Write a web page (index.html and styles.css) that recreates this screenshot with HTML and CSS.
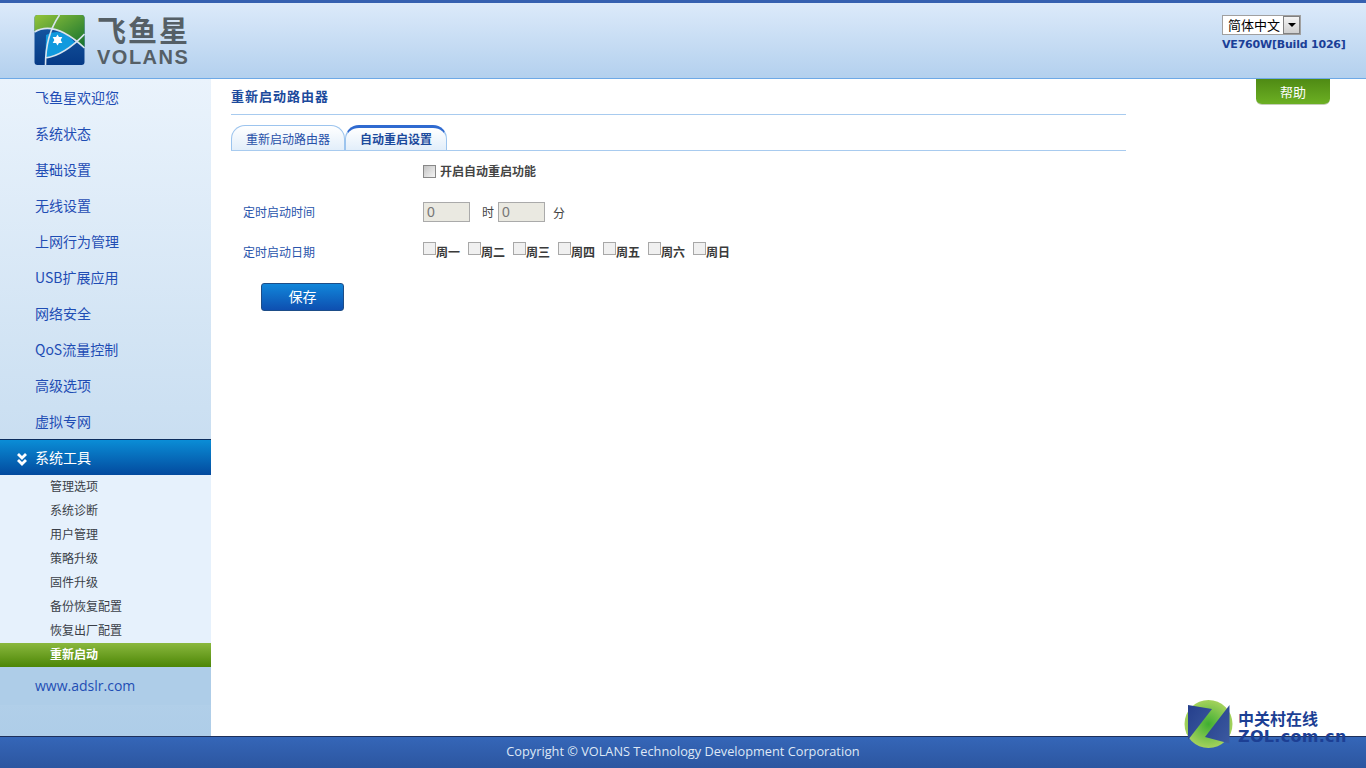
FILE: index.html
```html
<!DOCTYPE html>
<html lang="zh-CN">
<head>
    <meta charset="UTF-8">
    <meta name="viewport" content="width=device-width, initial-scale=1.0">
    <title>重新启动路由器</title>
    <link rel="stylesheet" href="styles.css">
</head>
<body>

<div class="header">
    <div class="logo">
        <svg class="logo-mark" width="51" height="50" viewBox="0 0 50 50">
            <defs>
                <linearGradient id="logoBlue" x1="0" y1="0" x2="0" y2="1">
                    <stop offset="0" stop-color="#1a5fa8"/>
                    <stop offset="1" stop-color="#063a86"/>
                </linearGradient>
                <linearGradient id="logoGreen" x1="0" y1="0" x2="1" y2="1">
                    <stop offset="0" stop-color="#93c43a"/>
                    <stop offset="1" stop-color="#12702f"/>
                </linearGradient>
            </defs>
            <rect width="50" height="50" rx="3" fill="url(#logoBlue)"/>
            <path d="M3 0H47Q50 0 50 3V33Q20 5 0 17V3Q0 0 3 0Z" fill="url(#logoGreen)"/>
            <path d="M11.5 20Q27 11 41 28Q27 40 11 43Z" fill="#119ade"/>
            <path d="M0 17Q20 5 50 33M25 0Q11 20 11 50M11 43Q30 40 50 19" fill="none" stroke="#d8e4ee" stroke-width="1.6"/>
            <polygon points="23,19.500 27.800,28 18.200,28" fill="#fff"/>
            <polygon points="23,30.500 18.200,22 27.800,22" fill="#fff"/>
        </svg>
        <div class="logo-text">
            <div class="logo-cn">飞鱼星</div>
            <div class="logo-en">VOLANS</div>
        </div>
    </div>
    <div class="header-right">
        <div class="lang">
            <select class="lang-select">
                <option>简体中文</option>
            </select>
            <span class="lang-arrow"></span>
        </div>
        <div class="build">VE760W[Build 1026]</div>
    </div>
</div>

<div class="main">
    <div class="sidebar">
        <a class="menu-item">飞鱼星欢迎您</a>
        <a class="menu-item">系统状态</a>
        <a class="menu-item">基础设置</a>
        <a class="menu-item">无线设置</a>
        <a class="menu-item">上网行为管理</a>
        <a class="menu-item">USB扩展应用</a>
        <a class="menu-item">网络安全</a>
        <a class="menu-item">QoS流量控制</a>
        <a class="menu-item">高级选项</a>
        <a class="menu-item">虚拟专网</a>
        <a class="menu-item menu-open">
            <svg class="menu-icon" width="12" height="14" viewBox="0 0 12 14">
                <path d="M2 2L6 6L10 2M2 8L6 12L10 8" fill="none" stroke="#fff" stroke-width="2.8"/>
            </svg>
            系统工具
        </a>
        <div class="submenu">
            <a class="sub-item">管理选项</a>
            <a class="sub-item">系统诊断</a>
            <a class="sub-item">用户管理</a>
            <a class="sub-item">策略升级</a>
            <a class="sub-item">固件升级</a>
            <a class="sub-item">备份恢复配置</a>
            <a class="sub-item">恢复出厂配置</a>
            <a class="sub-item sub-active">重新启动</a>
        </div>
        <a class="menu-item menu-link">www.adslr.com</a>
    </div>

    <div class="content">
        <h1 class="title">重新启动路由器</h1>
        <div class="tabs">
            <div class="tab">重新启动路由器</div>
            <div class="tab tab-active">自动重启设置</div>
        </div>
        <div class="form">
            <div class="form-row form-row-first">
                <div class="form-label"></div>
                <label class="enable"><input class="check check-on" type="checkbox"><span class="raise">开启自动重启功能</span></label>
            </div>
            <div class="form-row">
                <div class="form-label"><span class="raise">定时启动时间</span></div>
                <div class="time">
                    <input class="time-input" type="text" value="0" disabled>
                    <span class="unit-h">时</span>
                    <input class="time-input" type="text" value="0" disabled>
                    <span class="unit-m">分</span>
                </div>
            </div>
            <div class="form-row">
                <div class="form-label"><span class="raise">定时启动日期</span></div>
                <div class="days">
                    <label class="day"><input class="check" type="checkbox" disabled>周一</label>
                    <label class="day"><input class="check" type="checkbox" disabled>周二</label>
                    <label class="day"><input class="check" type="checkbox" disabled>周三</label>
                    <label class="day"><input class="check" type="checkbox" disabled>周四</label>
                    <label class="day"><input class="check" type="checkbox" disabled>周五</label>
                    <label class="day"><input class="check" type="checkbox" disabled>周六</label>
                    <label class="day"><input class="check" type="checkbox" disabled>周日</label>
                </div>
            </div>
            <button class="save" type="button">保存</button>
        </div>
    </div>

    <div class="help">帮助</div>
</div>

<div class="footer">Copyright © VOLANS Technology Development Corporation</div>

<div class="zol">
    <svg width="50" height="50" viewBox="0 0 50 50">
        <defs>
            <radialGradient id="zolGreen">
                <stop offset="0" stop-color="#3fae32"/>
                <stop offset="1" stop-color="#a4d25c"/>
            </radialGradient>
            <linearGradient id="zolBlue" x1="0" y1="0" x2="1" y2="1">
                <stop offset="0" stop-color="#253f8c"/>
                <stop offset="1" stop-color="#3c5aa0"/>
            </linearGradient>
        </defs>
        <circle cx="24.500" cy="24" r="24" fill="url(#zolGreen)"/>
        <polygon points="4,5 28,9 4,40" fill="url(#zolBlue)"/>
        <polygon points="45.500,5 45.500,43.500 21,37" fill="url(#zolBlue)"/>
    </svg>
    <div class="zol-text">
        <div class="zol-cn">中关村在线</div>
        <div class="zol-en">ZOL.com.cn</div>
    </div>
</div>

</body>
</html>
```

FILE: styles.css
```css
* {
    box-sizing: border-box;
}
body {
    margin: 0;
    height: 100vh;
    overflow: hidden;
    display: flex;
    flex-direction: column;
    position: relative;
    font-family: "Noto Sans CJK SC", "Noto Sans", sans-serif;
    font-size: 12px;
    background-color: #fff;
}
.header {
    height: 79px;
    flex: none;
    display: flex;
    justify-content: space-between;
    border-top: 3px solid #3560b0;
    border-bottom: 1px solid #6ea9e6;
    background: linear-gradient(#dceafa, #b3d0ee);
}
.logo {
    display: flex;
    padding: 12px 0 0 34px;
}
.logo-mark {
    flex: none;
}
.logo-text {
    margin-left: 12px;
    color: #555f66;
    font-weight: 700;
}
.logo-cn {
    font-size: 29px;
    line-height: 30px;
    letter-spacing: 2px;
    margin-top: -1px;
}
.logo-en {
    font-family: "Liberation Sans", sans-serif;
    font-size: 20px;
    line-height: 16px;
    letter-spacing: 1.500px;
    margin-top: 5px;
}
.header-right {
    width: 144px;
    padding-top: 12px;
}
.lang {
    position: relative;
    width: 79px;
    height: 20px;
}
.lang-select {
    appearance: none;
    display: block;
    width: 79px;
    height: 20px;
    margin: 0;
    padding: 0 0 0 5px;
    border: 1px solid #a0a0a0;
    border-radius: 0;
    background-color: #fff;
    color: #000;
    font-family: "Noto Sans CJK SC", sans-serif;
    font-size: 13px;
    line-height: 18px;
}
.lang-arrow {
    position: absolute;
    top: 1px;
    right: 1px;
    width: 17px;
    height: 18px;
    border: 1px solid #808080;
    background: linear-gradient(#f4f4f4, #cfcfcf);
}
.lang-arrow::after {
    content: "";
    position: absolute;
    left: 4px;
    top: 6px;
    border-style: solid;
    border-width: 4px 4px 0;
    border-color: #000 transparent transparent;
}
.build {
    margin-top: 2px;
    font-family: "DejaVu Sans", sans-serif;
    font-size: 11px;
    line-height: 15px;
    letter-spacing: -0.200px;
    font-weight: 700;
    color: #1b3f97;
    white-space: nowrap;
}
.main {
    flex: 1;
    display: flex;
    min-height: 0;
}
.sidebar {
    width: 211px;
    flex: none;
    padding-top: 1px;
    background: linear-gradient(#eaf3fc, #aecde8);
}
.menu-item {
    display: block;
    height: 36px;
    padding-left: 35px;
    font-size: 14px;
    line-height: 34px;
    color: #1f4db4;
}
.menu-open {
    position: relative;
    height: 36px;
    border-top: 1px solid #0b2d5e;
    background: linear-gradient(#0a8dd6, #034a9e);
    color: #fff;
    line-height: 35px;
    margin-top: -1px;
}
.menu-icon {
    position: absolute;
    left: 16px;
    top: 12px;
}
.submenu {
    background-color: #e6f1fc;
}
.sub-item {
    display: block;
    height: 24px;
    padding-left: 50px;
    line-height: 22px;
    color: #3a3f48;
}
.sub-active {
    background: linear-gradient(#8ab83e, #4c8606);
    color: #fff;
    font-weight: 700;
}
.menu-link {
    height: 38px;
    line-height: 38px;
    font-family: "Open Sans", sans-serif;
    background-color: #aecde8;
}
.content {
    width: 895px;
    flex: none;
    margin-left: 20px;
}
.title {
    height: 36px;
    margin: 0;
    border-bottom: 1px solid #a8cbef;
    font-size: 13px;
    line-height: 34px;
    letter-spacing: 1px;
    font-weight: 700;
    color: #1c4a9c;
}
.tabs {
    display: flex;
    height: 26px;
    margin-top: 10px;
    border-bottom: 1px solid #a8cbef;
}
.tab {
    height: 25px;
    padding: 0 14px;
    border: 1px solid #9cc4ee;
    border-bottom: 0;
    border-radius: 14px 14px 0 0;
    background: linear-gradient(#fff, #e2eefa);
    line-height: 25px;
    color: #2850a8;
}
.tab-active {
    border-top: 3px solid #2f6ad0;
    line-height: 21px;
    font-weight: 700;
    color: #1c4a9c;
}
.form-row {
    display: flex;
    align-items: center;
    height: 40px;
}
.form-row-first {
    margin-bottom: 1px;
}
.form-label {
    width: 192px;
    flex: none;
    padding-left: 12px;
    color: #2a55ac;
}
.raise {
    margin-bottom: 2px;
    display: block;
}
.check {
    appearance: none;
    width: 13px;
    height: 13px;
    margin: 0;
    border: 1px solid #a8a8a8;
    background-color: #f0f0f0;
    flex: none;
}
.check-on {
    border-color: #888;
    background: linear-gradient(135deg, #c4c4c4, #f4f4f4);
}
.enable {
    display: flex;
    align-items: center;
    gap: 4px;
    font-weight: 700;
    color: #444;
}
.time {
    display: flex;
    align-items: center;
    color: #444;
}
.time-input {
    width: 47px;
    height: 20px;
    padding: 0 3px;
    border: 1px solid #aaa;
    border-radius: 0;
    background-color: #eae9e1;
    color: #777;
    font-family: "Liberation Sans", sans-serif;
    font-size: 14px;
}
.unit-h {
    margin: 0 4px 2px 12px;
}
.unit-m {
    margin: 0 0 0 8px;
}
.days {
    display: flex;
    gap: 8px;
}
.day {
    display: flex;
    align-items: flex-start;
    font-weight: 700;
    color: #3a3a3a;
    line-height: 16px;
}
.day .check {
    margin-top: -2px;
}
.save {
    display: block;
    width: 83px;
    height: 28px;
    margin: 11px 0 0 30px;
    padding: 0 0 2px;
    border: 1px solid #1d4d88;
    border-radius: 3px;
    background: linear-gradient(#1186da, #0e4fb0);
    color: #fff;
    font-family: "Noto Sans CJK SC", sans-serif;
    font-size: 14px;
}
.help {
    width: 74px;
    height: 26px;
    margin-left: 130px;
    border-bottom: 1px solid #c4cdb8;
    border-radius: 0 0 6px 6px;
    background: linear-gradient(#4f8a14, #6cb023);
    color: #fff;
    font-size: 13px;
    line-height: 26px;
    text-align: center;
}
.footer {
    height: 32px;
    flex: none;
    border-top: 1px solid #1d2f5a;
    background: linear-gradient(#3566b8, #2c56a0);
    color: #dfe8f6;
    font-family: "Open Sans", sans-serif;
    font-size: 12.750px;
    line-height: 28px;
    text-align: center;
}
.zol {
    position: absolute;
    left: 1184px;
    top: 700px;
    display: flex;
}
.zol-text {
    margin-left: 4px;
    color: #1c3f94;
    font-weight: 700;
}
.zol-cn {
    font-size: 16px;
    line-height: 18px;
    margin-top: 9px;
}
.zol-en {
    font-family: "DejaVu Sans", sans-serif;
    font-size: 16px;
    line-height: 16px;
    margin-top: 2px;
    letter-spacing: 0.300px;
}
```
